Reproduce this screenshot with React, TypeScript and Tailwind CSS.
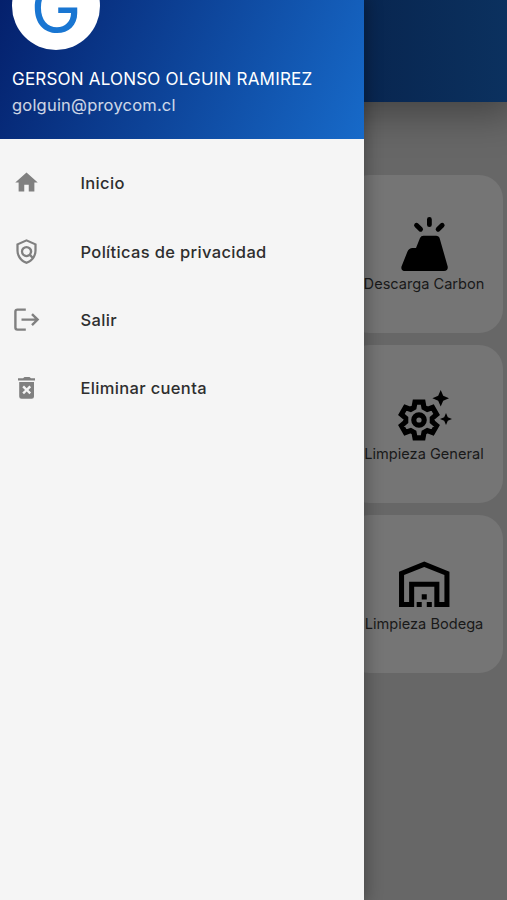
import { MdHome, MdOutlinePolicy, MdOutlineWarehouse } from "react-icons/md";
import type { ReactNode } from "react";

interface MenuItem {
  label: string;
  icon: ReactNode;
}

interface Task {
  label: string;
  icon: ReactNode;
}

function LogoutIcon() {
  return (
    <svg viewBox="0 0 28 28" className="size-7" fill="none" stroke="currentColor" strokeWidth="2.4">
      <path d="M12.8 3.6H4.4Q2.4 3.6 2.4 5.6V21.6Q2.4 23.6 4.4 23.6H12.8" />
      <path d="M8.5 13.6H24.6M19 8.1L24.6 13.6L19 19.1" />
    </svg>
  );
}

function DeleteIcon() {
  return (
    <svg viewBox="0 0 28 28" className="size-7" fill="currentColor">
      <path d="M5 4.2H10L11.5 3H16.5L18 4.2H22V6.6H5Z" />
      <path
        fillRule="evenodd"
        d="M6.2 8H21V22.4Q21 24.7 18.7 24.7H8.5Q6.2 24.7 6.2 22.4ZM9.3 13.2L12 15.9L9.3 18.6L11 20.3L13.7 17.6L16.4 20.3L18.1 18.6L15.4 15.9L18.1 13.2L16.4 11.5L13.7 14.2L11 11.5Z"
      />
    </svg>
  );
}

function CoalIcon() {
  return (
    <svg viewBox="0 0 60 60" className="size-[60px]" fill="currentColor">
      <path d="M29.5 20.7H42Q45 20.7 45.7 23.5L53.7 51.5Q54.3 56 50 56H11.5Q6.5 56 7.5 51.5L13.5 36.5Q15 33 18.5 33H22L26 23Q27 20.7 29.5 20.7Z" />
      <path
        d="M35.4 4.5V9.7M22.5 10.2L26.6 14.3M48.2 10.2L44.1 14.3"
        stroke="currentColor"
        strokeWidth="4.8"
        strokeLinecap="round"
      />
    </svg>
  );
}

function CleaningIcon() {
  return (
    <svg viewBox="0 0 60 60" className="size-[60px]" fill="none" stroke="currentColor" strokeWidth="5.2">
      <circle cx="25" cy="35" r="5.2" />
      <path d="M21 17.2H29L30 22.5L33.3 24.4L38.6 22.5L42.6 29.5L38.3 33.1V36.9L42.6 40.5L38.6 47.5L33.3 45.6L30 47.5L29 52.8H21L20 47.5L16.7 45.6L11.4 47.5L7.4 40.5L11.7 36.9V33.1L7.4 29.5L11.4 22.5L16.7 24.4L20 22.5Z" />
      <path
        d="M46.7 5L49.2 10.8L55 13.3L49.2 15.8L46.7 21.6L44.2 15.8L38.4 13.3L44.2 10.8ZM52 28L53.8 32.2L58 34L53.8 35.8L52 40L50.2 35.8L46 34L50.2 32.2Z"
        fill="currentColor"
        stroke="none"
      />
    </svg>
  );
}

const menuItems: MenuItem[] = [
  { label: "Inicio", icon: <MdHome size={27} /> },
  { label: "Políticas de privacidad", icon: <MdOutlinePolicy size={27} /> },
  { label: "Salir", icon: <LogoutIcon /> },
  { label: "Eliminar cuenta", icon: <DeleteIcon /> },
];

const tasks: Task[] = [
  { label: "Descarga Carbon", icon: <CoalIcon /> },
  { label: "Limpieza General", icon: <CleaningIcon /> },
  { label: "Limpieza Bodega", icon: <MdOutlineWarehouse size={60.5} /> },
];

export default function App() {
  return (
    <div className="relative h-[900px] overflow-hidden bg-[#676767] font-['Inter',sans-serif]">
      <header className="h-[102px] bg-linear-to-r from-[#08254f] from-70% to-[#0b315f] shadow-[0_4px_36px_8px_rgba(0,0,0,0.35)]" />

      <main className="flex flex-col items-end gap-[12px] pt-[72.7px] pr-1">
        {tasks.map((task) => (
          <div
            key={task.label}
            className="flex h-[158px] w-[158px] flex-col items-center justify-center rounded-[24px] bg-[#757575] text-black"
          >
            {task.icon}
            <span className="text-[14.6px] leading-[18px] whitespace-nowrap text-[#191919]">{task.label}</span>
          </div>
        ))}
      </main>

      {/* DRAWER */}
      <aside className="absolute inset-y-0 left-0 w-[364px] bg-[#f5f5f5] shadow-[0_0_16px_2px_rgba(0,0,0,0.32)]">
        <div className="flex h-[139px] flex-col justify-end overflow-hidden bg-linear-[114deg] from-[#04206c] to-[#176ac9] px-3 pb-[21px] text-white">
          <div className="flex size-[88px] shrink-0 items-center justify-center rounded-full bg-white pt-[2px] text-[68px] leading-none text-[#1976d2]">
            G
          </div>
          <p className="mt-[17px] text-[17px] leading-6 tracking-[0.2px] whitespace-nowrap">
            GERSON ALONSO OLGUIN RAMIREZ
          </p>
          <p className="pt-px text-[16.5px] leading-[26px] tracking-[0.2px] text-white/80">golguin@proycom.cl</p>
        </div>

        <nav className="pt-[9.6px]">
          {menuItems.map((item) => (
            <div key={item.label} className="flex h-[68.4px] items-center pl-[13px]">
              <span className="flex w-[67.5px] text-[#808080]">{item.icon}</span>
              <span className="pt-[1.5px] text-[16.5px] font-medium tracking-[0.34px] text-[#2e2e2e]">
                {item.label}
              </span>
            </div>
          ))}
        </nav>
      </aside>
    </div>
  );
}
